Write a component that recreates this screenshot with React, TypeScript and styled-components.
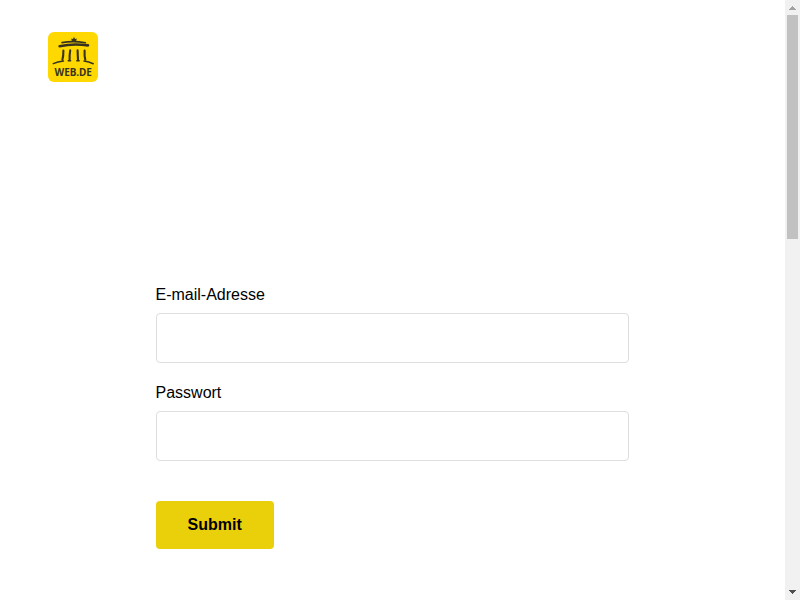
import React from "react";
import styled, { createGlobalStyle } from "styled-components";

const GlobalStyle = createGlobalStyle`
  * { box-sizing: border-box; }
  html, body { margin: 0; padding: 0; overflow: hidden; background: #fff; }
  body { font-family: "Liberation Sans", Arial, sans-serif; font-size: 16px; color: #000; }
`;

const Window = styled.div`
  display: flex;
  width: 100%;
  height: 100vh;
`;

const Page = styled.main`
  flex: 1;
  display: flex;
  flex-direction: column;
  align-items: center;
  min-width: 0;
`;

const Header = styled.header`
  align-self: stretch;
  height: 285px;
  padding: 32px 48px;
`;

const LogoSvg = styled.svg`
  display: block;
  width: 50px;
  height: 50px;
`;

const Form = styled.form`
  width: 474px;
`;

const Field = styled.div<{ $gap: number }>`
  display: flex;
  flex-direction: column;
  gap: 9px;
  margin-bottom: ${(p) => p.$gap}px;
`;

const Label = styled.label`
  line-height: 19px;
`;

const Input = styled.input`
  width: 473.8px;
  height: 50px;
  padding: 0 16px;
  border: 1px solid #dedede;
  border-radius: 4px;
  background: #fff;
  font: inherit;
  outline: none;
`;

const SubmitButton = styled.button`
  height: 48px;
  padding: 0 32px;
  border: 0;
  border-radius: 4px;
  background: #e9d00b;
  color: #000;
  font: bold 16px "Liberation Sans", Arial, sans-serif;
`;

const Scrollbar = styled.div`
  display: flex;
  flex-direction: column;
  justify-content: space-between;
  width: 15px;
  height: 100%;
  background: #f1f1f1;
`;

const ScrollTop = styled.div`
  display: flex;
  flex-direction: column;
  align-items: center;
`;

const Arrow = styled.svg`
  display: block;
  width: 15px;
  height: 15px;
`;

const Thumb = styled.div`
  width: 11px;
  height: 224px;
  background: #c1c1c1;
`;

function Logo() {
  return (
    <LogoSvg viewBox="0 0 50 50" role="img" aria-label="WEB.DE">
      <rect width="50" height="50" rx="6" fill="#ffd800" />
      <g fill="none" stroke="#37331f" strokeLinecap="round">
        <path d="M14 10.6Q25 8.7 37.4 10.7" strokeWidth="1.6" />
        <path d="M11.6 14.2Q25 11.4 40 13.4" strokeWidth="2.6" />
        <path d="M15.4 18.6Q15.5 24 14.4 27.8M22.2 18.4Q21.4 23 21.6 27.8M29.6 18.4Q29.7 23 30 27.8M36.6 18.6Q36.3 24 37.3 27.8" strokeWidth="2.1" />
        <path d="M5.3 31.6Q9.5 29.8 15.5 29.1M20.2 28.8H22.6M28.8 28.8H31.2M36 29.1Q41 29.7 45.2 31.7" strokeWidth="1.5" />
      </g>
      <path d="M23.2 6.4L25 7.1L26 4.8L27 7.1L28.8 6.4L28 9.8H24Z" fill="#37331f" />
      <text
        x="6.5"
        y="43.9"
        textLength="37.4"
        lengthAdjust="spacing"
        fill="#37331f"
        fontFamily="Noto Sans, sans-serif"
        fontSize="10"
        fontWeight="700"
      >
        WEB.DE
      </text>
    </LogoSvg>
  );
}

export default function App() {
  return (
    <>
      <GlobalStyle />
      <Window>
        <Page>
          <Header>
            <Logo />
          </Header>
          <Form onSubmit={(e) => e.preventDefault()}>
            <Field $gap={20}>
              <Label htmlFor="email">E-mail-Adresse</Label>
              <Input id="email" type="email" />
            </Field>
            <Field $gap={40}>
              <Label htmlFor="password">Passwort</Label>
              <Input id="password" type="password" />
            </Field>
            <SubmitButton type="submit">Submit</SubmitButton>
          </Form>
        </Page>
        <Scrollbar aria-hidden="true">
          <ScrollTop>
            <Arrow viewBox="0 0 15 15" shapeRendering="crispEdges">
              <path d="M7 6h1v1h1v1h1v1h1v1H4V9h1V8h1V7h1z" fill="#a3a3a3" />
            </Arrow>
            <Thumb />
          </ScrollTop>
          <Arrow viewBox="0 0 15 15" shapeRendering="crispEdges">
            <path d="M4 5h7v1h-1v1H9v1H8v1H7V8H6V7H5V6H4z" fill="#505050" />
          </Arrow>
        </Scrollbar>
      </Window>
    </>
  );
}
